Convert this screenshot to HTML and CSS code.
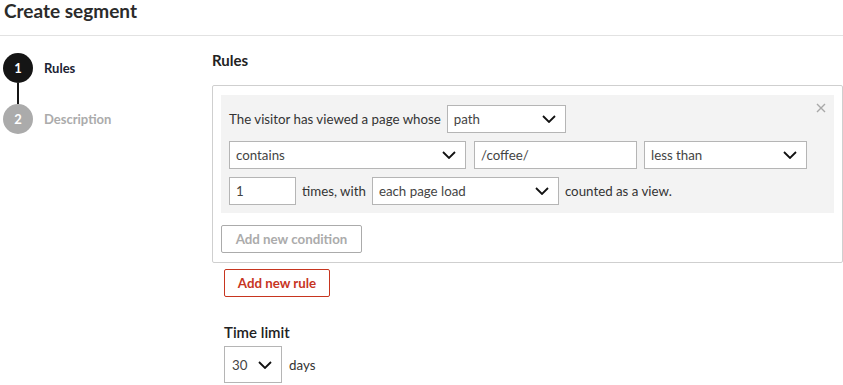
FILE: index.html
```html
<!DOCTYPE html>
<html lang="en">
<head>
<meta charset="utf-8">
<title>Create segment</title>
<link rel="stylesheet" href="styles.css">
</head>
<body>
<header class="page-header">
  <h1 class="page-title">Create segment</h1>
</header>
<main class="layout">
  <nav class="stepper">
    <div class="step step-active">
      <span class="step-num">1</span>
      <span class="step-label">Rules</span>
    </div>
    <div class="step-line"></div>
    <div class="step step-todo">
      <span class="step-num">2</span>
      <span class="step-label">Description</span>
    </div>
  </nav>
  <section class="content">
    <h2 class="section-title">Rules</h2>
    <div class="rule-box">
      <div class="condition">
        <button class="close" aria-label="Remove">
          <svg width="10" height="10" viewBox="0 0 10 10"><path d="M1 1L9 9M9 1L1 9" stroke="#a8a8a8" stroke-width="1.4" fill="none"/></svg>
        </button>
        <div class="row">
          <span class="txt">The visitor has viewed a page whose</span>
          <div class="select w-path"><span>path</span><svg class="chev" width="14" height="8" viewBox="0 0 14 8"><path d="M1 1L7 7L13 1" stroke="#111" stroke-width="1.8" fill="none"/></svg></div>
        </div>
        <div class="row">
          <div class="select w-contains"><span>contains</span><svg class="chev" width="14" height="8" viewBox="0 0 14 8"><path d="M1 1L7 7L13 1" stroke="#111" stroke-width="1.8" fill="none"/></svg></div>
          <div class="input w-value">/coffee/</div>
          <div class="select w-less"><span>less than</span><svg class="chev" width="14" height="8" viewBox="0 0 14 8"><path d="M1 1L7 7L13 1" stroke="#111" stroke-width="1.8" fill="none"/></svg></div>
        </div>
        <div class="row">
          <div class="input w-count">1</div>
          <span class="txt">times, with</span>
          <div class="select w-each"><span>each page load</span><svg class="chev" width="14" height="8" viewBox="0 0 14 8"><path d="M1 1L7 7L13 1" stroke="#111" stroke-width="1.8" fill="none"/></svg></div>
          <span class="txt">counted as a view.</span>
        </div>
      </div>
      <button class="btn btn-disabled">Add new condition</button>
    </div>
    <button class="btn btn-red">Add new rule</button>
    <div class="time">
      <div class="time-label">Time limit</div>
      <div class="time-row">
        <div class="select w-days"><span>30</span><svg class="chev" width="14" height="8" viewBox="0 0 14 8"><path d="M1 1L7 7L13 1" stroke="#111" stroke-width="1.8" fill="none"/></svg></div>
        <span class="txt">days</span>
      </div>
    </div>
  </section>
</main>
</body>
</html>
```

FILE: styles.css
```css
* { box-sizing: border-box; }
body {
  margin: 0;
  font-family: Lato, "Open Sans", sans-serif;
  font-size: 13.3px;
  color: #333;
  background: #fff;
}
.page-header {
  height: 36px;
  border-bottom: 1px solid #e2e2e2;
  padding-left: 4px;
}
.page-title {
  margin: 0;
  font-size: 19px;
  font-weight: 700;
  line-height: 22px;
  color: #2b2b2b;
}
.layout {
  display: flex;
}
.stepper {
  width: 212px;
  flex: none;
  padding: 17px 0 0 3px;
}
.step {
  display: flex;
  align-items: center;
  gap: 11px;
}
.step-num {
  width: 30px;
  height: 30px;
  border-radius: 50%;
  display: flex;
  align-items: center;
  justify-content: center;
  font-weight: 700;
  font-size: 13px;
  color: #fff;
}
.step-active .step-num { background: #151515; }
.step-todo .step-num { background: #ababab; }
.step-label { font-weight: 700; font-size: 13px; }
.step-active .step-label { color: #1c2333; }
.step-todo .step-label { color: #ababab; }
.step-line {
  width: 2px;
  height: 21px;
  margin-left: 14px;
  background: #151515;
}
.content {
  flex: 1;
  padding-top: 15px;
}
.section-title {
  margin: 0 0 15px;
  font-size: 15px;
  font-weight: 700;
  line-height: 19px;
  color: #222;
}
.rule-box {
  border: 1px solid #cfcfcf;
  border-radius: 2px;
  padding: 9px 8px 9px 8px;
  width: 631px;
}
.condition {
  position: relative;
  background: #f3f3f3;
  padding: 10px 8px 8px 8px;
  display: flex;
  flex-direction: column;
  gap: 8px;
}
.close {
  position: absolute;
  right: 8px;
  top: 8px;
  border: 0;
  background: none;
  padding: 0;
  width: 10px;
  height: 10px;
  display: flex;
}
.row {
  display: flex;
  align-items: center;
  gap: 6px;
  height: 28px;
}
.txt { white-space: nowrap; color: #333; }
.select, .input {
  height: 28px;
  border: 1px solid #b5b5b5;
  background: #fff;
  display: flex;
  align-items: center;
  padding: 0 6px;
  color: #444;
  font-size: 13.3px;
}
.select { justify-content: space-between; padding-right: 9px; }
.w-path { width: 119px; }
.w-contains { width: 237px; }
.w-value { width: 163px; margin-left: 2px; }
.w-less { width: 163px; margin-left: 1px; }
.w-count { width: 67px; }
.w-each { width: 187px; }
.w-days { width: 58px; height: 37px; padding-left: 7px; }
.btn {
  font-family: inherit;
  font-size: 13.3px;
  font-weight: 700;
  background: #fff;
  border-radius: 2px;
  height: 28px;
  padding: 0;
  display: block;
  white-space: nowrap;
  text-align: center;
}
.btn-disabled {
  margin-top: 12px;
  border: 1px solid #ababab;
  color: #ababab;
  width: 141px;
}
.btn-red {
  margin: 6px 0 0 12px;
  border: 1px solid #c7351f;
  color: #c7351f;
  width: 106px;
}
.time {
  margin: 26px 0 0 12px;
}
.time-label {
  font-size: 15px;
  font-weight: 600;
  color: #222;
  line-height: 18px;
}
.time-row {
  margin-top: 5px;
  display: flex;
  align-items: center;
  gap: 7px;
}
```
